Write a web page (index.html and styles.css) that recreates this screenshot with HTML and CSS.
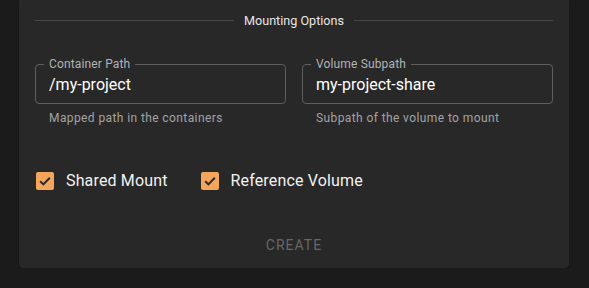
FILE: index.html
```html
<!DOCTYPE html>
<html lang="en">
<head>
	<meta charset="UTF-8">
	<meta name="viewport" content="width=device-width, initial-scale=1.0">
	<title>Mounting Options</title>
	<link rel="stylesheet" href="styles.css">
</head>
<body>
	<div class="card">
		<div class="divider"><span>Mounting Options</span></div>

		<div class="fields">
			<div class="field">
				<fieldset class="outline">
					<legend>Container Path</legend>
					<input type="text" value="/my-project">
				</fieldset>
				<p class="helper">Mapped path in the containers</p>
			</div>
			<div class="field">
				<fieldset class="outline">
					<legend>Volume Subpath</legend>
					<input type="text" value="my-project-share">
				</fieldset>
				<p class="helper">Subpath of the volume to mount</p>
			</div>
		</div>

		<div class="checks">
			<label class="check">
				<span class="box">
					<svg viewBox="0 0 18 18" width="18" height="18"><path d="M4.2 9.2l3.2 3.2 6.4-6.6" fill="none" stroke="#2a2a2a" stroke-width="2"/></svg>
				</span>
				Shared Mount
			</label>
			<label class="check">
				<span class="box">
					<svg viewBox="0 0 18 18" width="18" height="18"><path d="M4.2 9.2l3.2 3.2 6.4-6.6" fill="none" stroke="#2a2a2a" stroke-width="2"/></svg>
				</span>
				Reference Volume
			</label>
		</div>

		<div class="actions">
			<button class="btnCreate" disabled>Create</button>
		</div>
	</div>
</body>
</html>
```

FILE: styles.css
```css
body {
	margin: 0;
	background-color: #1b1b1b;
	font-family: Roboto, "Liberation Sans", sans-serif;
	color: #fff;
}
.card {
	width: 550px;
	margin-left: 19px;
	background-color: #282828;
	border-radius: 0 0 4px 4px;
	padding: 10px 16px 9px;
	box-sizing: border-box;
	box-shadow: 0 2px 2px rgba(0,0,0,0.4);
}
.divider {
	display: flex;
	align-items: center;
	gap: 10px;
	height: 20px;
	font-size: 12.6px;
	color: #e6e6e6;
}
.divider::before, .divider::after {
	content: "";
	flex: 1;
	border-top: 1px solid #474747;
}
.fields {
	display: flex;
	gap: 16px;
	margin-top: 28px;
}
.field {
	flex: 1;
}
.outline {
	margin: 0;
	padding: 0 13px;
	height: 46px;
	box-sizing: border-box;
	border: 1px solid #5e5e5e;
	border-radius: 4px;
}
.outline legend {
	padding: 0 5px;
	margin-left: -5px;
	font-size: 12px;
	line-height: 12px;
	letter-spacing: 0.15px;
	color: #b3b3b3;
}
.outline input {
	width: 100%;
	border: none;
	outline: none;
	background: transparent;
	color: #fff;
	font: 16px Roboto, "Liberation Sans", sans-serif;
	padding: 5px 0 0;
	margin: 0;
}
.helper {
	margin: 4px 14px 0;
	font-size: 12px;
	line-height: 20px;
	letter-spacing: 0.4px;
	color: #a3a3a3;
}
.checks {
	display: flex;
	gap: 33px;
	margin-top: 43px;
	padding-left: 1px;
}
.check {
	display: flex;
	align-items: center;
	gap: 12px;
	font-size: 16px;
	letter-spacing: 0.15px;
	color: #f2f2f2;
}
.box {
	display: block;
	width: 18px;
	height: 18px;
	border-radius: 2px;
	background-color: #f6a65c;
}
.box svg {
	display: block;
}
.actions {
	display: flex;
	justify-content: center;
	margin-top: 41px;
}
.btnCreate {
	background: none;
	border: none;
	padding: 6px 8px;
	font: 400 14px Roboto, "Liberation Sans", sans-serif;
	letter-spacing: 1px;
	text-transform: uppercase;
	color: #676767;
}
```
